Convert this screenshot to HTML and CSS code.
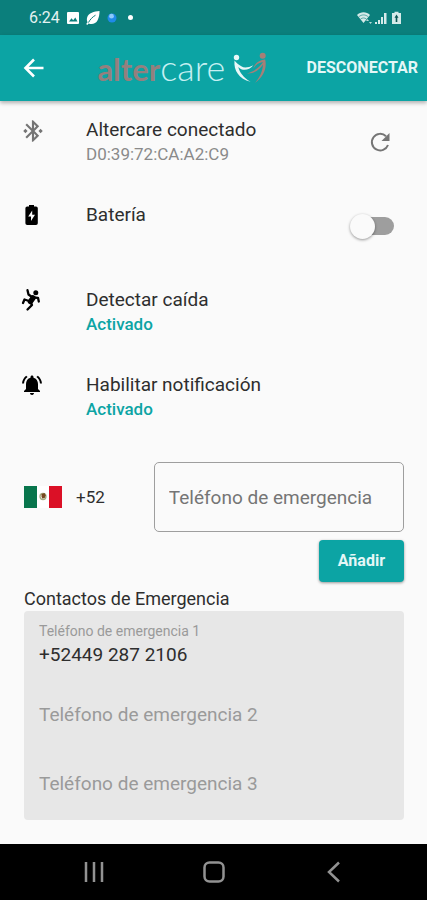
FILE: index.html
```html
<!DOCTYPE html>
<html lang="es">
<head>
<meta charset="utf-8">
<meta name="viewport" content="width=device-width, initial-scale=1">
<title>Altercare</title>
<link rel="stylesheet" href="styles.css">
</head>
<body>
<div class="status">
  <span class="status-time">6:24</span>
  <svg class="status-picture" viewBox="0 0 12 12" aria-hidden="true"><path fill="#fff" d="M1 0h10a1 1 0 0 1 1 1v10a1 1 0 0 1-1 1H1a1 1 0 0 1-1-1V1a1 1 0 0 1 1-1z"/><path fill="#0b7f7c" d="M2 9.500l2.500-3.200 1.700 2L8.300 5.500l2.200 4z"/></svg>
  <svg class="status-leaf" viewBox="0 0 14 14" aria-hidden="true"><path fill="#fff" d="M13.500 0C8 .3 2.600 2 1.200 6.300.6 8.300.8 10 1.600 11.300L.2 13l1 .9 1.500-1.500c3.300 1.400 7.200.2 8.900-3.200C13 6.300 13.600 3 13.500 0z"/><path d="M2.500 11.500C4 8.500 6.500 6 9.500 4.200" fill="none" stroke="#0b7f7c" stroke-width="1"/></svg>
  <svg class="status-ball" viewBox="0 0 10 10" aria-hidden="true"><circle cx="5" cy="5" r="4.500" fill="#1f8ae8"/><circle cx="4.500" cy="3.200" r="2.400" fill="#8cc9fa"/></svg>
  <span class="status-dot"></span>
  <svg class="status-signal" viewBox="0 0 44 14" aria-hidden="true">
    <path fill="#d5eae9" d="M0 4C3.500 .4 9.500 .4 13 4L6.500 12z"/>
    <path fill="none" stroke="#0b7f7c" stroke-width=".6" d="M1.800 5.800c2.700-2.500 6.700-2.500 9.400 0M3.600 8c1.700-1.400 4.100-1.400 5.800 0"/>
    <path fill="#b9dbd9" d="M9 10l1.500-2L12 10zM12 11h3l-1.500 2z"/>
    <path fill="#d5eae9" d="M18 11h2v2h-2zM21 9h2v4h-2zM24 6h2v7h-2zM27 2h2.500v11H27zM35 2h2.500V.8h4V2H44v11h-9z"/>
    <path fill="#0b5653" d="M39.500 3.500l2 3.200h-1.200V11h-1.600V6.700h-1.200z"/>
  </svg>
</div>

<header class="appbar">
  <button class="icon-button" type="button" aria-label="Volver">
    <svg class="back-icon" viewBox="0 0 24 24" aria-hidden="true"><path d="M21.500 12H3.500M12 3.500L3.500 12l8.500 8.500" fill="none" stroke="#fff" stroke-width="2.600"/></svg>
  </button>
  <div class="brand">
    <span class="brand-alter">alter</span><span class="brand-care">care</span>
    <svg class="brand-mark" viewBox="0 0 34 32" aria-hidden="true">
      <circle cx="3.500" cy="5.500" r="2.700" fill="#e9f7f7"/>
      <circle cx="29.700" cy="3.800" r="3" fill="#a77f77"/>
      <path fill="#e9f7f7" d="M1.500 8.500C.5 18.500 6 27 17.500 29.800 10.500 25.500 6.500 20.500 5.300 15c4 4.500 10.700 3.500 15-1.700-5 2.400-9 3-12 1C5.500 12.500 3.500 11 1.500 8.500z"/>
      <path fill="#a77f77" d="M32.200 7.500c2 9-2 18-10.200 23.500 5-6 7.500-11.500 8-18.500-3.500 5.500-9.500 9.500-16 9 6-1.500 12.500-6 16-11.500-4 .5-7.500 3-9.500 6.500 1-5 5.500-8.500 11.700-9z"/>
    </svg>
  </div>
  <button class="text-button" type="button">DESCONECTAR</button>
</header>

<main class="content">
  <ul class="settings">
    <li class="setting">
      <svg class="setting-icon muted" viewBox="0 0 24 24" aria-hidden="true"><path d="M7 12l-2-2-2 2 2 2 2-2zm10.710-4.290L12 2h-1v7.590L6.410 5 5 6.410 10.590 12 5 17.590 6.410 19 11 14.410V22h1l5.710-5.710-4.300-4.290 4.300-4.290zM13 5.830l1.880 1.880L13 9.590V5.830zm1.880 10.460L13 18.170v-3.760l1.880 1.880zM19 10l-2 2 2 2 2-2-2-2z"/></svg>
      <div class="setting-text"><span class="title">Altercare conectado</span><span class="detail">D0:39:72:CA:A2:C9</span></div>
      <button class="icon-button" type="button" aria-label="Actualizar">
        <svg class="refresh-icon" viewBox="0 0 24 24" aria-hidden="true"><path d="M20 15A8.300 8.300 0 1 1 18 6.200" fill="none" stroke="#757575" stroke-width="2"/><path fill="#757575" d="M21.500 3v8H13.500z"/></svg>
      </button>
    </li>
    <li class="setting">
      <svg class="setting-icon" viewBox="0 0 24 24" aria-hidden="true"><path fill-rule="evenodd" d="M9 3.500V2h5v1.500h2A1.800 1.800 0 0 1 17.800 5.300v14.900A1.800 1.800 0 0 1 16 22H7.200a1.800 1.800 0 0 1-1.800-1.800V5.300A1.800 1.800 0 0 1 7.200 3.500zM12.200 7.500l-4 6H11v4.500l4-6.200h-2.800z"/></svg>
      <label class="setting-text" for="battery"><span class="title">Batería</span></label>
      <input class="switch" id="battery" type="checkbox" role="switch">
    </li>
    <li class="setting">
      <svg class="setting-icon" viewBox="0 0 24 24" aria-hidden="true"><circle cx="15.800" cy="4.800" r="2.500"/><path d="M7.500 2.200l1 4.300 3.500 2.500M13.500 9.500l4.500.3.800 3.700M9 13L4.500 11.500 3 15M10.500 14l1.500 3-4.500 4.500" fill="none" stroke="#000" stroke-width="2.300" stroke-linejoin="round" stroke-linecap="round"/><path d="M13 10l-2.500 3.500" stroke="#000" stroke-width="5.500" stroke-linecap="round"/></svg>
      <div class="setting-text"><span class="title">Detectar caída</span><span class="state">Activado</span></div>
    </li>
    <li class="setting">
      <svg class="setting-icon" viewBox="0 0 24 24" aria-hidden="true"><path d="M7.580 4.080L6.150 2.650C3.750 4.480 2.170 7.300 2.030 10.500h2c.15-2.650 1.510-4.970 3.550-6.420zm12.390 6.420h2c-.15-3.200-1.730-6.020-4.120-7.850l-1.420 1.430c2.020 1.450 3.390 3.770 3.540 6.420zM18 11c0-3.070-1.640-5.640-4.500-6.320V4c0-.83-.67-1.500-1.500-1.500s-1.500.67-1.500 1.500v.68C7.630 5.360 6 7.920 6 11v5l-2 2v1h16v-1l-2-2v-5zm-6 11c.14 0 .27-.01.4-.04.65-.14 1.180-.58 1.440-1.180.1-.24.15-.5.15-.78h-4c.01 1.100.9 2 2.010 2z"/></svg>
      <div class="setting-text"><span class="title">Habilitar notificación</span><span class="state">Activado</span></div>
    </li>
  </ul>

  <form class="add-form">
    <div class="phone-row">
      <button class="country" type="button">
        <svg class="flag" viewBox="0 0 38 22" aria-hidden="true"><path fill="#fff" d="M0 0h38v22H0z"/><path fill="#08754c" d="M0 0h13v22H0z"/><path fill="#db1026" d="M25 0h13v22H25z"/><circle cx="19" cy="10.500" r="3" fill="none" stroke="#a5ad82" stroke-width="1.300"/><path fill="#76491f" d="M17.500 8l3-1 1.200 2.500-1 2.500-2.500.5-.7-2z"/></svg>
        <span>+52</span>
      </button>
      <input class="phone-input" type="tel" aria-label="Teléfono de emergencia" placeholder="Teléfono de emergencia">
    </div>
    <button class="add-button" type="button">Añadir</button>
  </form>

  <section class="contacts">
    <h2 class="contacts-title">Contactos de Emergencia</h2>
    <div class="contacts-box">
      <div class="contact">
        <label class="contact-label" for="contact1">Teléfono de emergencia 1</label>
        <input class="contact-input" id="contact1" type="tel" value="+52449 287 2106">
      </div>
      <div class="contact"><input class="contact-input" type="tel" aria-label="Teléfono de emergencia 2" placeholder="Teléfono de emergencia 2"></div>
      <div class="contact"><input class="contact-input" type="tel" aria-label="Teléfono de emergencia 3" placeholder="Teléfono de emergencia 3"></div>
    </div>
  </section>
</main>

<nav class="navbar">
  <button class="nav-button" type="button" aria-label="Recientes"><svg class="nav-icon" viewBox="0 0 24 24" aria-hidden="true"><path d="M4 2v20M12 2v20M20 2v20"/></svg></button>
  <button class="nav-button" type="button" aria-label="Inicio"><svg class="nav-icon" viewBox="0 0 24 24" aria-hidden="true"><rect x="2.500" y="2.500" width="19" height="19" rx="5"/></svg></button>
  <button class="nav-button" type="button" aria-label="Atrás"><svg class="nav-icon" viewBox="0 0 24 24" aria-hidden="true"><path d="M18 2.500L8 12l10 9.500"/></svg></button>
</nav>
</body>
</html>
```
FILE: styles.css
```css
* {
  box-sizing: border-box;
}

body {
  margin: 0;
  min-height: 100vh;
  display: flex;
  flex-direction: column;
  background: #fafafa;
  color: #2e2e2e;
  font-family: Roboto, sans-serif;
  font-size: 19px;
  line-height: 24px;
}

button,
input {
  font: inherit;
  color: inherit;
  border: 0;
  padding: 0;
  margin: 0;
  background: none;
}

svg {
  display: block;
  flex: none;
}

.status {
  display: flex;
  align-items: center;
  gap: 7px;
  height: 35px;
  padding: 0 26px 0 29px;
  background: #0b7f7c;
  color: #e4f2f1;
}

.status-time {
  font-size: 16px;
}

.status-picture {
  width: 12px;
  height: 12px;
}

.status-leaf {
  width: 14px;
  height: 14px;
}

.status-ball {
  width: 10px;
  height: 10px;
}

.status-dot {
  width: 5px;
  height: 5px;
  margin-left: 4px;
  border-radius: 50%;
  background: #fff;
}

.status-signal {
  width: 44px;
  height: 14px;
  margin-left: auto;
}

.appbar {
  display: flex;
  align-items: center;
  justify-content: space-between;
  height: 66px;
  padding: 0 9px 0 10px;
  background: #0ca4a4;
  box-shadow: 0 2px 4px rgba(0, 0, 0, 0.3);
}

.icon-button {
  display: grid;
  place-items: center;
  width: 48px;
  height: 48px;
}

.back-icon {
  width: 24px;
  height: 24px;
}

.brand {
  display: flex;
  align-items: baseline;
  font-family: Lato, sans-serif;
  line-height: 40px;
}

.brand-alter {
  font-size: 31px;
  font-weight: 700;
  color: #94807e;
}

.brand-care {
  font-size: 36px;
  font-weight: 300;
  color: #c5f0f2;
}

.brand-mark {
  align-self: center;
  width: 34px;
  height: 32px;
  margin-left: 8px;
}

.text-button {
  font-size: 16px;
  font-weight: 700;
  color: #e4f7f7;
}

.content {
  flex: 1;
  padding: 17px 23px 24px 24px;
}

.settings {
  margin: 0;
  padding: 0;
  list-style: none;
}

.setting {
  display: grid;
  grid-template-columns: 62px 1fr auto;
  align-items: start;
  min-height: 85px;
}

.setting-icon {
  width: 24px;
  height: 24px;
  margin-left: -4px;
  fill: #000;
}

.muted {
  width: 26px;
  height: 26px;
  fill: #757575;
}

.setting-text {
  display: flex;
  flex-direction: column;
}

.detail {
  font-size: 17px;
  color: #8a8a8a;
}

.state {
  font-size: 17px;
  font-weight: 500;
  color: #0ca4a4;
}

.refresh-icon {
  width: 24px;
  height: 24px;
}

.switch {
  appearance: none;
  display: flex;
  align-items: center;
  width: 36px;
  height: 18px;
  margin: 14px 10px 0 0;
  border-radius: 9px;
  background: #9e9e9e;
}

.switch::before {
  content: "";
  flex: none;
  width: 25px;
  height: 25px;
  margin-left: -8px;
  border-radius: 50%;
  background: #fafafa;
  box-shadow: 0 1px 3px rgba(0, 0, 0, 0.4);
}

.add-form {
  display: flex;
  flex-direction: column;
  gap: 8px;
  padding-top: 4px;
}

.phone-row {
  display: flex;
  align-items: center;
  gap: 49px;
}

.country {
  display: flex;
  align-items: center;
  gap: 14px;
  font-size: 17px;
}

.flag {
  width: 38px;
  height: 22px;
}

.phone-input {
  flex: 1;
  min-width: 0;
  height: 70px;
  padding: 0 14px;
  border: 1px solid #9e9e9e;
  border-radius: 5px;
}

::placeholder {
  color: #757575;
  opacity: 1;
}

.add-button {
  align-self: flex-end;
  padding: 9px 19px;
  border-radius: 4px;
  background: #0ca4a4;
  color: #e4f7f7;
  font-size: 16px;
  font-weight: 700;
  box-shadow: 0 1px 3px rgba(0, 0, 0, 0.4);
}

.contacts {
  padding-top: 5px;
}

.contacts-title {
  margin: 0;
  font-size: 18px;
  font-weight: 400;
}

.contacts-box {
  border-radius: 4px;
  background: #e7e7e7;
}

.contact {
  display: flex;
  flex-direction: column;
  justify-content: center;
  height: 70px;
  padding: 0 15px 4px;
}

.contact:last-child {
  height: 69px;
}

.contact-label {
  font-size: 14px;
  line-height: 20px;
  color: #9a9a9a;
}

.contact-input {
  width: 100%;
  height: 26px;
}

.contact-input::placeholder {
  color: #9a9a9a;
}

.navbar {
  display: flex;
  height: 56px;
  padding: 0 34px;
  background: #000;
}

.nav-button {
  flex: 1;
  display: grid;
  place-items: center;
}

.nav-icon {
  width: 24px;
  height: 24px;
  fill: none;
  stroke: #929292;
  stroke-width: 2.5;
}
```
